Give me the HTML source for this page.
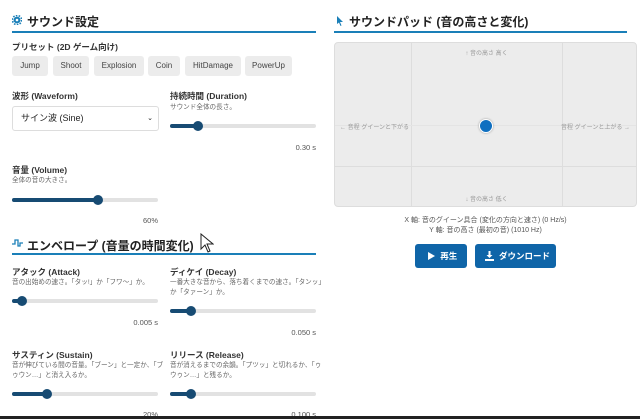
<!DOCTYPE html><html><head><meta charset="utf-8"><style>
*{margin:0;padding:0;box-sizing:border-box}
body{width:640px;height:419px;background:#fff;font-family:"Liberation Sans","Noto Sans CJK JP",sans-serif;color:#222;position:relative;overflow:hidden}
.a{position:absolute;white-space:nowrap}
.h{font-size:12px;font-weight:bold;color:#222}
.line{position:absolute;height:2px;background:#1a7fb8}
.lb{font-size:8.5px;font-weight:bold;color:#333}
.ds{font-size:6.6px;color:#666;line-height:9.5px}
.val{font-size:7.5px;color:#555}
.btn{position:absolute;top:56px;height:20px;background:#ececec;border-radius:3px;font-size:8px;color:#444;text-align:center;line-height:20px}
.tr{position:absolute;height:4px;background:#e2e2e2;border-radius:2px}
.tr i{position:absolute;left:0;top:0;height:4px;background:#174b73;border-radius:2px}
.tr b{position:absolute;top:-3px;width:10px;height:10px;border-radius:50%;background:#174b73;margin-left:-5px}
.pl{font-size:6px;color:#999}
</style></head><body>
<svg class="a" style="left:12px;top:15px" width="10" height="10" viewBox="0 0 10 10"><circle cx="5" cy="5" r="3.4" fill="#1a7fb8"/><circle cx="5" cy="5" r="4.6" fill="none" stroke="#1a7fb8" stroke-width="1.6" stroke-dasharray="1.6 1.3"/><circle cx="5" cy="5" r="1.3" fill="#fff"/></svg>
<div class="a h" style="left:27px;top:13px">サウンド設定</div>
<div class="line" style="left:12px;top:31px;width:304px"></div>
<div class="a lb" style="left:12px;top:41px">プリセット (2D ゲーム向け)</div>
<div class="btn" style="left:12px;width:36px">Jump</div>
<div class="btn" style="left:53px;width:36px">Shoot</div>
<div class="btn" style="left:94px;width:50px">Explosion</div>
<div class="btn" style="left:148px;width:32px">Coin</div>
<div class="btn" style="left:185px;width:56px">HitDamage</div>
<div class="btn" style="left:245px;width:47px">PowerUp</div>
<div class="a lb" style="left:12px;top:90px">波形 (Waveform)</div>
<div class="a" style="left:12px;top:106px;width:147px;height:25px;border:1px solid #ddd;border-radius:3px;font-size:9px;line-height:23px;padding-left:8px">サイン波 (Sine)<span style="position:absolute;right:5px;font-size:7px">&#8964;</span></div>
<div class="a lb" style="left:170px;top:90px">持続時間 (Duration)</div>
<div class="a ds" style="left:170px;top:103px">サウンド全体の長さ。</div>
<div class="tr" style="left:170px;top:124px;width:146px"><i style="width:28px"></i><b style="left:28px"></b></div>
<div class="a val" style="right:324px;top:143px">0.30 s</div>
<div class="a lb" style="left:12px;top:164px">音量 (Volume)</div>
<div class="a ds" style="left:12px;top:176px">全体の音の大きさ。</div>
<div class="tr" style="left:12px;top:198px;width:146px"><i style="width:86px"></i><b style="left:86px"></b></div>
<div class="a val" style="right:482px;top:216px">60%</div>
<svg class="a" style="left:12px;top:239px" width="11" height="8" viewBox="0 0 11 8"><path d="M0 5H3V1H6V7H8V4H11" fill="none" stroke="#1a7fb8" stroke-width="1.3"/></svg>
<div class="a h" style="left:27px;top:237px">エンベロープ (音量の時間変化)</div>
<div class="line" style="left:12px;top:253px;width:304px"></div>
<div class="a lb" style="left:12px;top:266px">アタック (Attack)</div>
<div class="a ds" style="left:12px;top:278px">音の出始めの速さ。「タッ!」か「フワ～」か。</div>
<div class="tr" style="left:12px;top:299px;width:146px"><i style="width:10px"></i><b style="left:10px"></b></div>
<div class="a val" style="right:482px;top:318px">0.005 s</div>
<div class="a lb" style="left:170px;top:266px">ディケイ (Decay)</div>
<div class="a ds" style="left:170px;top:278px">一番大きな音から、落ち着くまでの速さ。「タンッ」<br>か「タァーン」か。</div>
<div class="tr" style="left:170px;top:309px;width:146px"><i style="width:21px"></i><b style="left:21px"></b></div>
<div class="a val" style="right:324px;top:328px">0.050 s</div>
<div class="a lb" style="left:12px;top:349px">サスティン (Sustain)</div>
<div class="a ds" style="left:12px;top:361px">音が伸びている間の音量。「ブーン」と一定か、「ブ<br>ゥウン…」と消え入るか。</div>
<div class="tr" style="left:12px;top:392px;width:146px"><i style="width:35px"></i><b style="left:35px"></b></div>
<div class="a val" style="right:482px;top:410px">20%</div>
<div class="a lb" style="left:170px;top:349px">リリース (Release)</div>
<div class="a ds" style="left:170px;top:361px">音が消えるまでの余韻。「プツッ」と切れるか、「ゥ<br>ウゥン…」と残るか。</div>
<div class="tr" style="left:170px;top:392px;width:146px"><i style="width:21px"></i><b style="left:21px"></b></div>
<div class="a val" style="right:324px;top:410px">0.100 s</div>
<div class="a" style="left:0;top:416px;width:640px;height:3px;background:#222"></div>
<svg class="a" style="left:336px;top:16px" width="8" height="10" viewBox="0 0 8 10"><path d="M1 0L7 6H4L5.5 9.5L4.5 10L3 6.5L1 8Z" fill="#1a7fb8"/></svg>
<div class="a h" style="left:349px;top:13px">サウンドパッド (音の高さと変化)</div>
<div class="line" style="left:334px;top:31px;width:293px"></div>
<div class="a" style="left:334px;top:42px;width:303px;height:165px;background:#ececec;border-radius:4px;border:1px solid #ddd;overflow:hidden">
<div class="a" style="left:76px;top:0;width:1px;height:165px;background:#ddd"></div>
<div class="a" style="left:227px;top:0;width:1px;height:165px;background:#ddd"></div>
<div class="a" style="left:0;top:123px;width:303px;height:1px;background:#ddd"></div>
<div class="a" style="left:0;top:82px;width:303px;height:1px;background:#e4e4e4"></div>
<div class="a pl" style="left:0;width:303px;text-align:center;top:5px">↑ 音の高さ 高く</div>
<div class="a pl" style="left:0;width:303px;text-align:center;top:151px">↓ 音の高さ 低く</div>
<div class="a pl" style="left:5px;top:79px">← 音程 グイーンと下がる</div>
<div class="a pl" style="right:6px;top:79px">音程 グイーンと上がる →</div>
<div class="a" style="left:144px;top:76px;width:14px;height:14px;border-radius:50%;background:#0f6fc0;border:1.5px solid #fff;box-shadow:0 0 2px #999"></div>
</div>
<div class="a" style="left:334px;width:303px;text-align:center;top:216px;font-size:7px;color:#555;line-height:10px">X 軸: 音のグイーン具合 (変化の方向と速さ) (0 Hz/s)<br>Y 軸: 音の高さ (最初の音) (1010 Hz)</div>
<div class="a" style="left:415px;top:244px;width:52px;height:24px;background:#0f65a8;border-radius:3px;color:#fff;font-size:8.5px;font-weight:bold;line-height:24px;padding-left:12px">▶&nbsp; 再生</div>
<div class="a" style="left:475px;top:244px;width:81px;height:24px;background:#0f65a8;border-radius:3px;color:#fff;font-size:8.5px;font-weight:bold;line-height:24px;padding-left:24px">ダウンロード</div>
<svg class="a" style="left:485px;top:251px" width="9" height="10" viewBox="0 0 9 10"><path d="M3.5 0H5.5V4H7.5L4.5 7L1.5 4H3.5Z M0 8H9V10H0Z" fill="#fff"/></svg>
<svg class="a" style="left:200px;top:233px" width="14" height="20" viewBox="0 0 14 20"><path d="M1 1V16L5 12L8 19L10 18L7 11H13Z" fill="#fff" stroke="#222" stroke-width="1"/></svg>
</body></html>
